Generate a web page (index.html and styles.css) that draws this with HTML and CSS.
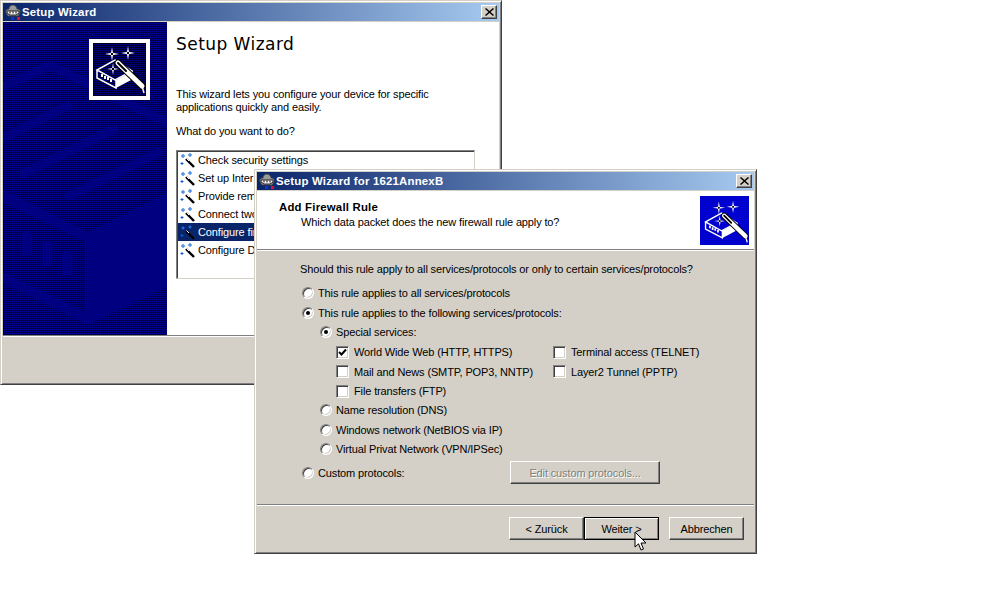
FILE: index.html
```html
<!DOCTYPE html>
<html lang="de">
<head>
  <meta charset="UTF-8" />
  <meta name="viewport" content="width=device-width, initial-scale=1" />
  <title>Setup Wizard</title>
  <link rel="stylesheet" href="styles.css">
</head>
<body>

<!-- Icons, die mehrfach gebraucht werden -->
<svg class="defs" width="0" height="0" aria-hidden="true">
  <defs>
    <path id="spark" fill="#fff" d="M0-7 .9-1.6 1.6-.9 7 0 1.6.9.9 1.6 0 7-.9 1.6-1.6.9-7 0-1.6-.9-.9-1.6Z"/>
    <symbol id="wizard-icon" viewBox="0 0 53 53">
      <use href="#spark" transform="translate(19 11)"/>
      <use href="#spark" transform="translate(35 10)"/>
      <rect x="18" y="10" width="2" height="2" fill="#000"/>
      <rect x="34" y="9" width="2" height="2" fill="#000"/>
      <path d="M23 37 40 28V36L23 45Z" fill="#fff"/>
      <path d="M4 27 22 17 39 28 22 37ZM4 27V35L23 45V37" fill="none" stroke="#fff" stroke-width="1.5"/>
      <path d="M9 31v3M12 33v3M15 34v3M18 36v3" stroke="#fff" stroke-width="2" fill="none"/>
      <use href="#spark" transform="translate(20 26) scale(.85)"/>
      <rect x="19" y="25" width="2" height="2" fill="#000"/>
      <path d="M25 20 49 43" stroke="#000" stroke-width="7" stroke-linecap="round"/>
      <path d="M25 20 49 43" stroke="#fff" stroke-width="5" stroke-linecap="round"/>
      <path d="M25 20 33 28" stroke="#000" stroke-width="2" stroke-linecap="round"/>
      <path d="M49 43 51 50" stroke="#fff" stroke-width="1.5"/>
    </symbol>
    <symbol id="wand" viewBox="0 0 16 16">
      <path d="M7 7 15 15" stroke="#000" stroke-width="2.4"/>
      <path d="M7.500 6.500 10 9" stroke="#fff" stroke-width="1"/>
      <path d="M4 2v4M2 4h4M11 1v4M9 3h4M3 10v3M1.500 11.500h3" stroke="#0a5ad8" stroke-width="1"/>
      <path d="M3.500 3.500h1v1h-1zM10.500 2.500h1v1h-1z" fill="#7fd0ff"/>
    </symbol>
    <symbol id="net-icon" viewBox="0 0 16 16">
      <path d="M1 9C0 6 2 5 4 5 4 2 6 1 8 1 10 1 12 3 12 5 14 5 16 6 15 9L13 12H3Z" fill="#9a9a9a" stroke="#404040" stroke-width=".8"/>
      <path d="M2 7H14V9L11 11H5L2 9Z" fill="#fff" stroke="#202020" stroke-width="1"/>
      <path d="M5 7.500v2M8 7.500v2M11 7.500v2" stroke="#202020" stroke-width="1.200"/>
      <rect x="6" y="13" width="3" height="3" fill="#1030e0"/>
      <rect x="12" y="13" width="3" height="3" fill="#e01030"/>
    </symbol>
  </defs>
</svg>

<!-- Hinteres Fenster -->
<div class="window window-back">
  <div class="titlebar">
    <svg class="title-icon"><use href="#net-icon"/></svg>
    <span class="title-text">Setup Wizard</span>
    <span class="close-btn"><svg width="9" height="8" viewBox="0 0 9 8"><path d="M1 0 4.500 3 8 0 9 1 5.500 4 9 7 8 8 4.500 5 1 8 0 7 3.500 4 0 1Z"/></svg></span>
  </div>
  <div class="wizard-main">
    <div class="side-panel">
      <svg class="side-art" width="164" height="313" viewBox="3 22 164 313">
        <g fill="none" stroke="#000080" stroke-width="9">
          <path d="M-5 90 50 65.500 175 126"/>
          <g stroke-linecap="round">
            <path d="M-5 142 68 106"/>
            <path d="M24 173 114 129"/>
            <path d="M69 196 159 152"/>
          </g>
        </g>
        <path fill="#000080" d="M3 189 85 231H91L167 193V287L92 323H84L3 283V271.500L85 311.500V241.500L3 202Z"/>
        <g fill="#000080">
          <rect x="22" y="232" width="10" height="24" rx="3"/>
          <rect x="42" y="242" width="10" height="24" rx="3"/>
          <rect x="62" y="252" width="10" height="24" rx="3"/>
        </g>
      </svg>
      <div class="logo-box">
        <svg class="logo-icon" width="53" height="53"><use href="#wizard-icon" width="53" height="53"/></svg>
      </div>
    </div>
    <div class="welcome">
      <h1>Setup Wizard</h1>
      <p class="intro">This wizard lets you configure your device for specific<br>applications quickly and easily.</p>
      <p class="ask">What do you want to do?</p>
      <ul class="task-list">
        <li><svg class="wand"><use href="#wand"/></svg>Check security settings</li>
        <li><svg class="wand"><use href="#wand"/></svg>Set up Inter</li>
        <li><svg class="wand"><use href="#wand"/></svg>Provide rem</li>
        <li><svg class="wand"><use href="#wand"/></svg>Connect two</li>
        <li class="selected"><svg class="wand"><use href="#wand"/></svg>Configure fir</li>
        <li><svg class="wand"><use href="#wand"/></svg>Configure D</li>
      </ul>
    </div>
  </div>
  <div class="sep"></div>
</div>

<!-- Vorderes Fenster -->
<div class="window window-front">
  <div class="titlebar">
    <svg class="title-icon"><use href="#net-icon"/></svg>
    <span class="title-text">Setup Wizard for 1621AnnexB</span>
    <span class="close-btn"><svg width="9" height="8" viewBox="0 0 9 8"><path d="M1 0 4.500 3 8 0 9 1 5.500 4 9 7 8 8 4.500 5 1 8 0 7 3.500 4 0 1Z"/></svg></span>
  </div>
  <div class="page-head">
    <div class="head-text">
      <h2>Add Firewall Rule</h2>
      <p>Which data packet does the new firewall rule apply to?</p>
    </div>
    <svg class="head-icon" width="49" height="49"><use href="#wizard-icon" x="2" y="2" width="47" height="47"/></svg>
  </div>
  <div class="sep"></div>
  <div class="page-body">
    <p class="question">Should this rule apply to all services/protocols or only to certain services/protocols?</p>

    <div class="opt"><span class="radio"></span>This rule applies to all services/protocols</div>
    <div class="opt"><span class="radio checked"></span>This rule applies to the following services/protocols:</div>

    <div class="sub">
      <div class="opt opt-special"><span class="radio checked"></span>Special services:</div>
      <div class="services">
        <div class="opt"><span class="check checked"><svg width="9" height="9" viewBox="0 0 9 9"><path d="M1 4 3.500 6.500 8 1.500" fill="none" stroke="#000" stroke-width="2"/></svg></span>World Wide Web (HTTP, HTTPS)</div>
        <div class="opt"><span class="check"></span>Terminal access (TELNET)</div>
        <div class="opt"><span class="check"></span>Mail and News (SMTP, POP3, NNTP)</div>
        <div class="opt"><span class="check"></span>Layer2 Tunnel (PPTP)</div>
        <div class="opt"><span class="check"></span>File transfers (FTP)</div>
      </div>
      <div class="opt"><span class="radio"></span>Name resolution (DNS)</div>
      <div class="opt"><span class="radio"></span>Windows network (NetBIOS via IP)</div>
      <div class="opt"><span class="radio"></span>Virtual Privat Network (VPN/IPSec)</div>
    </div>

    <div class="custom-row">
      <div class="opt"><span class="radio"></span>Custom protocols:</div>
      <button class="btn btn-edit" disabled>Edit custom protocols...</button>
    </div>
  </div>
  <div class="sep"></div>
  <div class="page-foot">
    <button class="btn btn-nav">&lt; Zurück</button>
    <button class="btn btn-nav btn-default">Weiter &gt;</button>
    <button class="btn btn-nav btn-cancel">Abbrechen</button>
  </div>
</div>

<!-- Mauszeiger -->
<svg class="cursor" width="14" height="21" viewBox="0 0 14 21">
  <path d="M1 1V16L4.500 12.800 7 19 9.500 18 7 12H12Z" fill="#fff" stroke="#000" stroke-width="1"/>
</svg>

</body>
</html>
```

FILE: styles.css
```css
* { box-sizing: border-box; }
html, body {
  margin: 0;
  height: 612px;
  overflow: hidden;
  background-color: #fff;
}
body {
  position: relative;
  font-family: "Liberation Sans", Arial, sans-serif;
  font-size: 11px;
  letter-spacing: -0.13px;
  color: #000;
}
p, h1, h2, ul { margin: 0; padding: 0; }
.defs { position: absolute; }

/* Fenster */
.window {
  position: absolute;
  display: flex;
  flex-direction: column;
  height: 385px;
  padding: 2px;
  padding-top: 3px;
  background-color: #d4d0c8;
  border: 1px solid;
  border-color: #d4d0c8 #404040 #404040 #d4d0c8;
  box-shadow: inset 1px 1px #fff, inset -1px -1px #808080;
}
.window-back { left: 0; top: 0; width: 502px; }
.window-front { left: 254px; top: 169px; width: 503px; }

.titlebar {
  display: flex;
  align-items: center;
  flex: none;
  height: 18px;
  margin-top: -1px;
  margin-bottom: 1px;
  padding: 0 2px;
  background: linear-gradient(to right, #0a246a, #a6caf0);
  color: #fff;
}
.title-icon { width: 16px; height: 16px; margin-right: 1px; flex: none; }
.title-text { font-weight: bold; font-size: 11.4px; letter-spacing: 0.2px; }
.close-btn {
  display: flex;
  align-items: center;
  justify-content: center;
  width: 16px;
  height: 14px;
  margin-left: auto;
  background-color: #d4d0c8;
  border: 1px solid;
  border-color: #fff #404040 #404040 #fff;
  box-shadow: inset -1px -1px #808080;
}

.sep {
  flex: none;
  height: 2px;
  background-color: #fff;
  border-top: 1px solid #808080;
}

/* Hinteres Fenster */
/* Punktraster aus zwei Streifenlagen */
.wizard-main {
  display: flex;
  flex: none;
  height: 313px;
  background-color: #fff;
}
.side-panel {
  position: relative;
  width: 164px;
  flex: none;
  background-color: #000098;
  background-image:
    repeating-linear-gradient(90deg, rgba(0,0,0,.5) 0 1px, transparent 1px 2px),
    repeating-linear-gradient(0deg, rgba(0,0,0,.5) 0 1px, transparent 1px 2px);
}
.side-art { display: block; }
.logo-box {
  position: absolute;
  left: 86px;
  top: 17px;
  width: 61px;
  height: 61px;
  padding: 4px;
  background-color: #fff;
}
.logo-icon {
  display: block;
  background-color: #000080;
  background-image:
    repeating-linear-gradient(90deg, rgba(0,0,0,.7) 0 1px, transparent 1px 2px),
    repeating-linear-gradient(0deg, rgba(0,0,0,.7) 0 1px, transparent 1px 2px);
}

.welcome {
  flex: 1;
  padding: 12px 24px 0 9px;
}
.welcome h1 {
  font-family: "DejaVu Sans", Verdana, sans-serif;
  font-weight: normal;
  font-size: 17px;
  letter-spacing: 0.45px;
  line-height: 20px;
}
.intro { margin-top: 34px; line-height: 13px; }
.ask { margin-top: 11px; line-height: 13px; }
.task-list {
  list-style: none;
  margin-top: 12px;
  height: 129px;
  padding: 0 1px;
  background-color: #fff;
  border: 1px solid;
  border-color: #808080 #d4d0c8 #d4d0c8 #808080;
  box-shadow: inset 1px 1px #404040;
}
.task-list li {
  display: flex;
  align-items: center;
  height: 18px;
  padding-left: 1px;
  white-space: nowrap;
  overflow: hidden;
}
.task-list li.selected {
  background-color: #0a246a;
  color: #fff;
}
.wand { width: 16px; height: 16px; margin-right: 3px; flex: none; }

/* Vorderes Fenster */
.page-head {
  display: flex;
  justify-content: space-between;
  flex: none;
  height: 58px;
  padding: 5px 5px 0 22px;
  background-color: #fff;
}
.head-text h2 {
  font-size: 11.4px;
  font-weight: bold;
  line-height: 13px;
  margin-top: 5px;
  letter-spacing: 0.2px;
}
.head-text p {
  margin-top: 2px;
  padding-left: 22px;
  line-height: 13px;
}
.head-icon {
  flex: none;
  background-color: #0000f0;
  background-image:
    repeating-linear-gradient(90deg, rgba(0,0,0,.1) 0 1px, transparent 1px 2px),
    repeating-linear-gradient(0deg, rgba(0,0,0,.1) 0 1px, transparent 1px 2px);
}

.page-body {
  flex: none;
  height: 253px;
  padding: 12px 0 0 43px;
}
.question { line-height: 13px; margin-bottom: 7px; }

.opt {
  display: flex;
  align-items: center;
  height: 20px;
  white-space: nowrap;
}
.sub { padding-left: 18px; }
.sub .opt { height: 19.5px; }
.opt-special { margin-top: -1px; }
.services {
  display: grid;
  grid-template-columns: 217px auto;
  padding-left: 18px;
  padding-top: 1px;
  margin-bottom: -0.5px;
}
.custom-row {
  display: flex;
  align-items: center;
  justify-content: space-between;
  width: 360px;
  margin-top: 2px;
}

.radio, .check {
  display: inline-flex;
  align-items: center;
  justify-content: center;
  flex: none;
  background-color: #fff;
  border: 1px solid;
  border-color: #808080 #fff #fff #808080;
  box-shadow: inset 1px 1px #404040, inset -1px -1px #d4d0c8;
}
.radio {
  width: 12px;
  height: 12px;
  margin-left: 2px;
  margin-right: 4px;
  border-radius: 50%;
}
.radio.checked::after {
  content: "";
  width: 4px;
  height: 4px;
  border-radius: 50%;
  background-color: #000;
}
.check {
  width: 13px;
  height: 13px;
  margin-right: 5px;
}

.btn {
  font: inherit;
  letter-spacing: inherit;
  color: #000;
  padding: 0;
  background-color: #d4d0c8;
  border: 1px solid;
  border-color: #fff #404040 #404040 #fff;
  box-shadow: inset -1px -1px #808080;
}
.btn-edit {
  width: 150px;
  height: 23px;
  color: #808080;
  text-shadow: 1px 1px #fff;
}
.page-foot {
  display: flex;
  flex: 1;
  padding: 11px 0 0 252px;
}
.btn-nav { width: 75px; height: 23px; }
.btn-default {
  border-color: #000;
  box-shadow: inset 1px 1px #fff, inset -1px -1px #808080;
}
.btn-cancel { margin-left: 10px; }

.cursor {
  position: absolute;
  left: 634px;
  top: 531px;
}
```
